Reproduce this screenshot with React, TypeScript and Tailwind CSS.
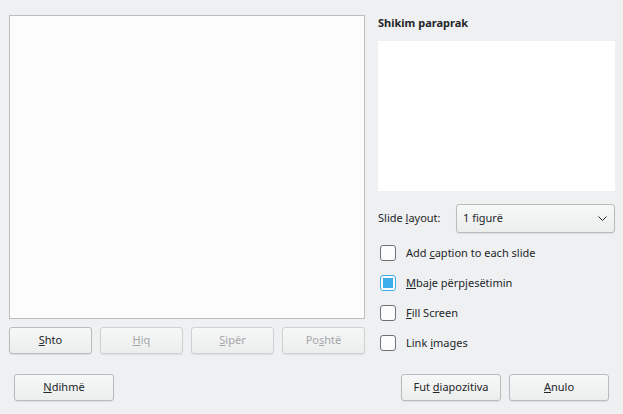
import React from "react";

const Btn = ({
  children,
  disabled,
  className = "",
}: {
  children: React.ReactNode;
  disabled?: boolean;
  className?: string;
}) => (
  <button
    type="button"
    className={`h-[27px] rounded-[3px] border border-[#b9bbbd] bg-gradient-to-b from-[#f6f7f7] to-[#eceded] shadow-[0_1px_1px_rgba(0,0,0,0.08)] text-[11px] ${
      disabled ? "text-[#a4a6a8] border-[#cfd1d3]" : "text-[#232629]"
    } ${className}`}
  >
    {children}
  </button>
);

const Check = ({ checked, children }: { checked?: boolean; children: React.ReactNode }) => (
  <div className="flex h-[30px] items-center">
    <div
      className={`ml-[2px] flex h-[16px] w-[16px] items-center justify-center rounded-[3px] border bg-[#fcfcfc] ${
        checked ? "border-[#3daee9]" : "border-[#6e7275]"
      }`}
    >
      {checked && <div className="h-[10px] w-[10px] bg-[#3daee9]" />}
    </div>
    <span className="ml-[10px]">{children}</span>
  </div>
);

export default function App() {
  return (
    <div
      className="flex h-[414px] w-[623px] flex-col bg-[#eff0f1] text-[11px] text-[#232629]"
      style={{ fontFamily: '"Noto Sans", sans-serif' }}
    >
      <div className="flex pl-[9px] pt-[15px]">
        <div className="flex w-[356px] flex-col">
          <div className="h-[304px] border border-[#bcbebf] bg-[#fcfcfc]" />
          <div className="mt-[8px] flex gap-[8px]">
            <Btn className="w-[83px]"><u>S</u>hto</Btn>
            <Btn className="w-[83px]" disabled><u>H</u>iq</Btn>
            <Btn className="w-[83px]" disabled><u>S</u>ipër</Btn>
            <Btn className="w-[83px]" disabled>Po<u>s</u>htë</Btn>
          </div>
        </div>
        <div className="ml-[13px] flex w-[237px] flex-col">
          <div className="h-[16px] leading-[16px] font-bold">Shikim paraprak</div>
          <div className="mt-[10px] h-[150px] bg-white" />
          <div className="mt-[13px] flex h-[29px] items-center">
            <span className="w-[78px]">
              Slide <u>l</u>ayout:
            </span>
            <div className="flex h-[29px] w-[159px] items-center justify-between rounded-[3px] border border-[#b9bbbd] bg-gradient-to-b from-[#f6f7f7] to-[#eceded] pl-[6px] pr-[7px] shadow-[0_1px_1px_rgba(0,0,0,0.08)]">
              <span>1 figurë</span>
              <svg width="9" height="5" viewBox="0 0 9 5">
                <path d="M0.5 0.5 L4.5 4.5 L8.5 0.5" fill="none" stroke="#232629" strokeWidth="1" />
              </svg>
            </div>
          </div>
          <div className="mt-[5px] flex flex-col">
            <Check>
              Add <u>c</u>aption to each slide
            </Check>
            <Check checked>
              <u>M</u>baje përpjesëtimin
            </Check>
            <Check>
              <u>F</u>ill Screen
            </Check>
            <Check>
              Link <u>i</u>mages
            </Check>
          </div>
        </div>
      </div>
      <div className="mt-[16px] flex pl-[14px] pr-[14px]">
        <Btn className="w-[100px]"><u>N</u>dihmë</Btn>
        <div className="flex-1" />
        <Btn className="w-[100px]">
          Fut <u>d</u>iapozitiva
        </Btn>
        <Btn className="ml-[8px] w-[100px]"><u>A</u>nulo</Btn>
      </div>
    </div>
  );
}
